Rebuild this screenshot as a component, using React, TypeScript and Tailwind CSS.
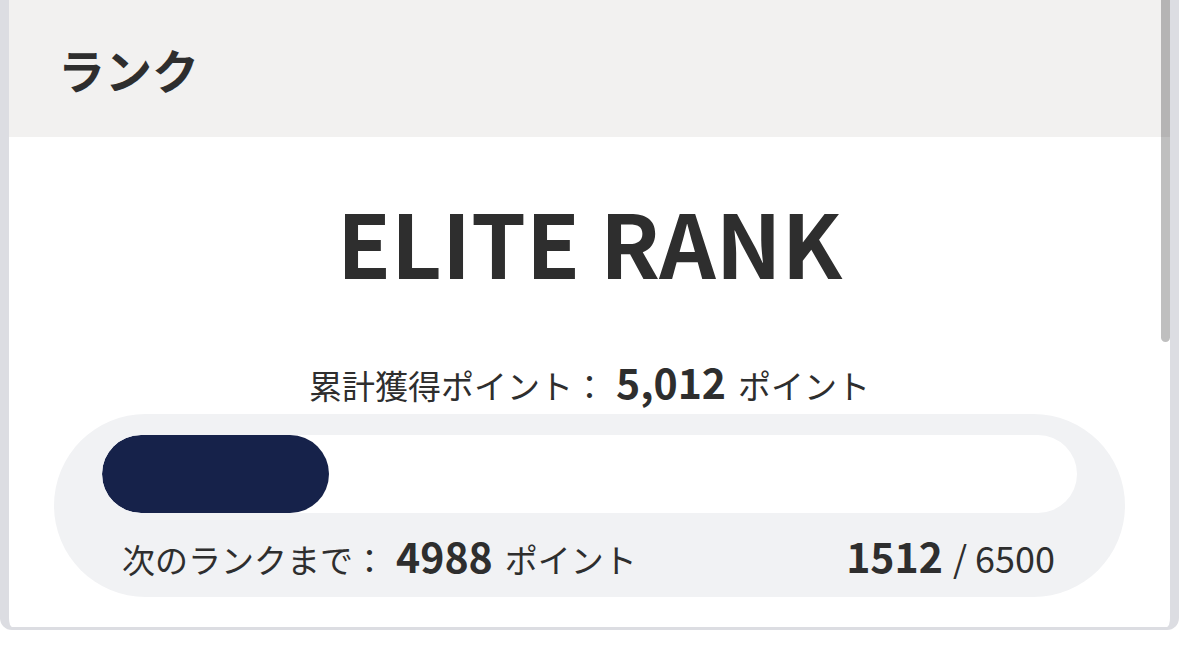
const rank = {
  name: 'ELITE RANK',
  total: 5012,
  current: 1512,
  goal: 6500,
};

const jp = { fontFamily: '"Noto Sans CJK JP", "Noto Sans", sans-serif' };

export default function App() {
  const pct = (rank.current / rank.goal) * 100;
  const remaining = rank.goal - rank.current;

  return (
    <div className="w-full h-[668px] bg-white text-[#2e2e2e]" style={jp}>
      <div className="relative w-[1179px] h-[630px] border-l-[9px] border-r-[9px] border-b-[3px] border-[#dcdde2] rounded-b-[12px] bg-white overflow-hidden">
        <div className="h-[137px] bg-[#f2f1f0] flex items-center pl-[49px]">
          <h2 className="text-[47px] font-bold leading-none">ランク</h2>
        </div>

        <div className="flex flex-col items-center">
          <div className="mt-[60px] text-[88px] font-bold leading-none h-[88px]">{rank.name}</div>

          <div className="mt-[76px] h-[41px] flex items-baseline">
            <span className="text-[33px] leading-none">累計獲得ポイント：</span>
            <span className="text-[41px] font-bold leading-none ml-[10px]">
              {rank.total.toLocaleString('en-US')}
            </span>
            <span className="text-[33px] leading-none ml-[12px]">ポイント</span>
          </div>
        </div>

        <div className="px-[45px] mt-[12px]">
          <div className="bg-[#f1f2f4] rounded-full pt-[21px] pb-[21px] px-[48px]">
            <div className="h-[78px] bg-white rounded-full overflow-hidden">
              <div className="h-full bg-[#16224a] rounded-full" style={{ width: `${pct}%` }} />
            </div>
            <div className="mt-[22px] h-[41px] flex items-baseline justify-between pl-[20px] pr-[22px]">
              <div className="flex items-baseline">
                <span className="text-[33px] leading-none">次のランクまで：</span>
                <span className="text-[41px] font-bold leading-none ml-[10px]">{remaining}</span>
                <span className="text-[33px] leading-none ml-[12px]">ポイント</span>
              </div>
              <div className="flex items-baseline">
                <span className="text-[41px] font-bold leading-none">{rank.current}</span>
                <span className="text-[36px] leading-none ml-[10px]">/ {rank.goal}</span>
              </div>
            </div>
          </div>
        </div>

        <div className="absolute top-0 right-0 w-[9px] h-[342px] bg-black/25 rounded-b-full" />
      </div>
    </div>
  );
}
